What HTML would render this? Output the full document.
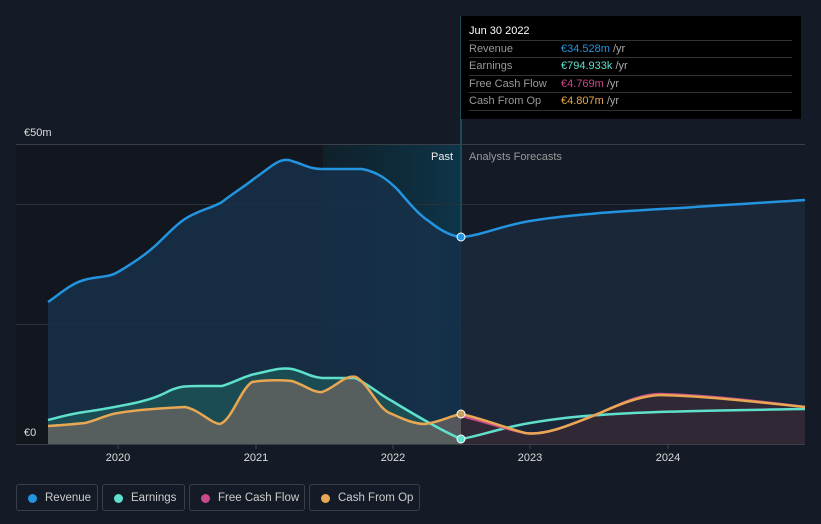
<!DOCTYPE html>
<html><head><style>
body{margin:0;width:821px;height:524px;background:#151b26;font-family:"Liberation Sans",sans-serif;overflow:hidden;position:relative}
.tt{position:absolute;left:461px;top:16px;width:340px;height:103px;background:#000;color:#fff}
.tt .h{position:absolute;left:8px;top:9px;font-size:11px}
.row{position:absolute;left:8px;width:323px;border-top:1px solid #333;height:17px;font-size:11px;color:#999;line-height:17px}
.row span{position:absolute;left:92px}
.row i{font-style:normal;color:#aaa}
.leg{position:absolute;top:484px;height:27px;border:1px solid #3a404b;border-radius:3px;color:#ccc;font-size:11.5px;line-height:27px;box-sizing:border-box}
.leg b{position:absolute;left:11px;top:9px;width:9px;height:9px;border-radius:50%}
.leg span{position:absolute;left:28px}
</style></head><body>
<svg width="821" height="524" style="position:absolute;left:0;top:0">
<defs>
<linearGradient id="hl" x1="0" x2="1"><stop offset="0" stop-color="#0b3a4a" stop-opacity=".3"/><stop offset="1" stop-color="#0a4a66" stop-opacity=".6"/></linearGradient>
</defs>
<rect x="16" y="144" width="445" height="300" fill="#12161e"/>
<rect x="323" y="144" width="138" height="300" fill="url(#hl)"/>
<line x1="16" x2="805" y1="144.5" y2="144.5" stroke="#3a3f48"/>
<line x1="16" x2="805" y1="204.5" y2="204.5" stroke="#2a2f38"/>
<line x1="16" x2="805" y1="324.5" y2="324.5" stroke="#2a2f38"/>
<line x1="16" x2="805" y1="444.5" y2="444.5" stroke="#3a3f48"/>
<line x1="461" x2="461" y1="16" y2="444" stroke="#1b4a5a" stroke-width="2"/>
<path d="M48,302 C60,294 70,284 84,280 C98,276 108,278 118,272 C135,262 145,255 155,246 C168,234 178,222 190,216 C205,208 212,208 222,202 C235,192 245,186 255,178 C270,168 280,156 292,161 C305,165 310,169 322,169 L362,169 C378,172 388,180 398,190 C410,204 418,214 430,222 C440,230 450,236 461,237 L461,444 L48,444Z" fill="#16304a" opacity=".85"/>
<path d="M461,237 C480,236 500,226 530,221 C560,216 580,215 600,213 C640,210 660,209 680,208 C720,205 760,203 805,200 L805,444 L461,444Z" fill="#1a2738"/>
<path d="M48,420 C60,417 70,414 84,412 C100,410 115,407 130,404 C145,401 155,398 165,393 C178,386 185,386 200,386 L222,386 C235,382 245,376 255,374 C270,371 280,367 292,369 C305,372 310,377 322,378 L355,378 C370,385 380,395 392,401 C410,412 440,430 461,439 L461,444 L48,444Z" fill="#1f5a5a" opacity=".7"/>
<path d="M48,426 C65,425 75,424 85,423 C98,420 108,414 118,413 C135,410 165,408 185,407 C200,410 210,423 220,424 C232,420 240,390 252,382 C265,380 280,380 292,381 C305,385 313,393 322,392 C335,388 345,374 356,377 C370,385 378,410 392,414 C405,420 415,424 425,424 C440,422 450,416 461,414 L461,444 L48,444Z" fill="#6a6462" opacity=".75"/>
<path d="M461,414 C480,418 500,426 525,433 C545,436 570,425 600,413 C620,404 640,396 660,395 C700,396 740,400 805,407 L805,444 L461,444Z" fill="#3a2a35" opacity=".7"/>
<path d="M48,302 C60,294 70,284 84,280 C98,276 108,278 118,272 C135,262 145,255 155,246 C168,234 178,222 190,216 C205,208 212,208 222,202 C235,192 245,186 255,178 C270,168 280,156 292,161 C305,165 310,169 322,169 L362,169 C378,172 388,180 398,190 C410,204 418,214 430,222 C440,230 450,236 461,237 C480,236 500,226 530,221 C560,216 580,215 600,213 C640,210 660,209 680,208 C720,205 760,203 805,200" fill="none" stroke="#2394e0" stroke-width="2.5"/>
<path d="M48,420 C60,417 70,414 84,412 C100,410 115,407 130,404 C145,401 155,398 165,393 C178,386 185,386 200,386 L222,386 C235,382 245,376 255,374 C270,371 280,367 292,369 C305,372 310,377 322,378 L355,378 C370,385 380,395 392,401 C410,412 440,430 461,439 C480,436 500,428 530,423 C560,418 580,416 600,415 C640,412 680,411 805,409" fill="none" stroke="#5ee0cc" stroke-width="2.5"/>
<path d="M461,416 C480,420 500,428 525,433 C545,436 570,425 600,413 C620,404 640,394 660,394 C700,395 740,399 805,407" fill="none" stroke="#c84a8c" stroke-width="2.5"/>
<path d="M48,426 C65,425 75,424 85,423 C98,420 108,414 118,413 C135,410 165,408 185,407 C200,410 210,423 220,424 C232,420 240,390 252,382 C265,380 280,380 292,381 C305,385 313,393 322,392 C335,388 345,374 356,377 C370,385 378,410 392,414 C405,420 415,424 425,424 C440,422 450,416 461,414 C480,418 500,426 525,433 C545,436 570,425 600,413 C620,404 640,396 660,395 C700,396 740,400 805,407" fill="none" stroke="#e8a752" stroke-width="2.5"/>
<circle cx="461" cy="237" r="4" fill="#2394e0" stroke="#fff" stroke-width="1"/>
<circle cx="461" cy="439" r="4" fill="#5ee0cc" stroke="#fff" stroke-width="1"/>
<circle cx="461" cy="414" r="4" fill="#c8a060" stroke="#fff" stroke-width="1"/>
<g stroke="#444" ><line x1="118" x2="118" y1="444" y2="449"/><line x1="256" x2="256" y1="444" y2="449"/><line x1="393" x2="393" y1="444" y2="449"/><line x1="530" x2="530" y1="444" y2="449"/><line x1="668" x2="668" y1="444" y2="449"/></g>
<g fill="#ddd" font-size="11" font-family="Liberation Sans" text-anchor="middle"><text x="118" y="461">2020</text><text x="256" y="461">2021</text><text x="393" y="461">2022</text><text x="530" y="461">2023</text><text x="668" y="461">2024</text></g>
<text x="24" y="136" fill="#ddd" font-size="11" font-family="Liberation Sans">€50m</text>
<text x="24" y="436" fill="#ddd" font-size="11" font-family="Liberation Sans">€0</text>
<text x="453" y="160" fill="#eee" font-size="11" text-anchor="end" font-family="Liberation Sans">Past</text>
<text x="469" y="160" fill="#999" font-size="11" font-family="Liberation Sans">Analysts Forecasts</text>
</svg>
<div class="tt"><div class="h">Jun 30 2022</div>
<div class="row" style="top:24px">Revenue<span><font color="#2394e0">€34.528m</font> <i>/yr</i></span></div>
<div class="row" style="top:41px">Earnings<span><font color="#5ee0cc">€794.933k</font> <i>/yr</i></span></div>
<div class="row" style="top:59px">Free Cash Flow<span><font color="#c84a8c">€4.769m</font> <i>/yr</i></span></div>
<div class="row" style="top:76px;border-bottom:1px solid #333">Cash From Op<span><font color="#e8a752">€4.807m</font> <i>/yr</i></span></div>
</div>
<div class="leg" style="left:16px;width:82px"><b style="background:#2394e0"></b><span>Revenue</span></div>
<div class="leg" style="left:102px;width:83px"><b style="background:#5ee0cc"></b><span>Earnings</span></div>
<div class="leg" style="left:189px;width:116px"><b style="background:#c84a8c"></b><span>Free Cash Flow</span></div>
<div class="leg" style="left:309px;width:111px"><b style="background:#e8a752"></b><span>Cash From Op</span></div>
</body></html>
